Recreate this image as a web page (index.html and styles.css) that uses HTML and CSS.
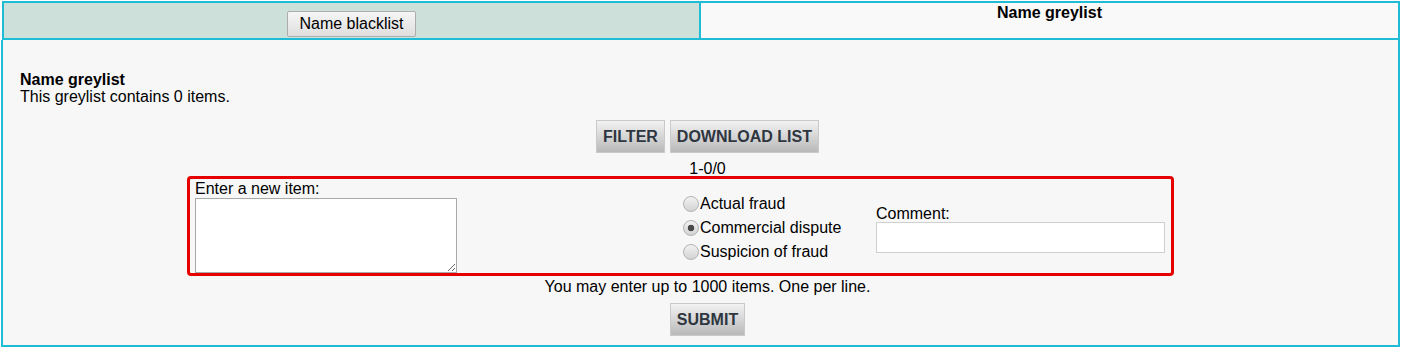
FILE: index.html
```html
<!DOCTYPE html>
<html lang="en">
<head>
  <meta charset="UTF-8">
  <title>Name greylist</title>
  <link rel="stylesheet" href="styles.css">
</head>
<body>

  <div class="notice"><span>Changes require approval by supervisor</span></div>

  <div class="tabs">
    <div class="tab tab-off">
      <button type="button" class="tab-btn">Name blacklist</button>
    </div>
    <div class="tab tab-on">Name greylist</div>
  </div>

  <div class="panel">
    <div class="intro">
      <b>Name greylist</b><br>
      This greylist contains 0 items.
    </div>

    <div class="actions">
      <button type="button" class="btn">FILTER</button>
      <button type="button" class="btn">DOWNLOAD LIST</button>
    </div>

    <div class="pager">1-0/0</div>

    <form class="entry" id="entryForm">
      <div class="col-items">
        <label for="items">Enter a new item:</label>
        <textarea id="items"></textarea>
      </div>
      <div class="col-type">
        <label class="choice"><input type="radio" name="type" value="actual">Actual fraud</label>
        <label class="choice"><input type="radio" name="type" value="dispute" checked>Commercial dispute</label>
        <label class="choice"><input type="radio" name="type" value="suspicion">Suspicion of fraud</label>
      </div>
      <div class="col-comment">
        <label for="comment">Comment:</label>
        <input type="text" id="comment">
      </div>
    </form>

    <div class="hint">You may enter up to 1000 items. One per line.</div>

    <div class="submit-row">
      <button type="submit" form="entryForm" class="btn">SUBMIT</button>
    </div>
  </div>

</body>
</html>
```

FILE: styles.css
```css
html, body {
  margin: 0;
  background-color: #fff;
  font-family: "Liberation Sans", Arial, sans-serif;
  font-size: 16px;
  color: #000;
}
.notice {
  height: 1px;
  overflow: hidden;
  padding-left: 20px;
}
.notice span {
  display: block;
  margin-top: -16px;
  line-height: 16px;
  color: #e00000;
}
.tabs {
  display: flex;
  margin-left: 2px;
  width: 1398px;
  height: 39px;
}
.tab {
  box-sizing: border-box;
  height: 39px;
  border: 2px solid #1fbcd6;
  text-align: center;
}
.tab-off {
  width: 697px;
  border-right: none;
  background-color: #cde0da;
}
.tab-on {
  flex: 1;
  background-color: #f9f9f9;
  font-weight: bold;
  line-height: 16px;
  padding-top: 2px;
}
.tab-btn {
  margin-top: 8px;
  height: 26px;
  padding: 0 11px;
  font: 16px "Liberation Sans", Arial, sans-serif;
  color: #000;
  background: linear-gradient(#f6f6f6, #dedede);
  border: 1px solid #adadad;
  border-radius: 2px;
}
.panel {
  box-sizing: border-box;
  margin-left: 1px;
  width: 1399px;
  border: 2px solid #1fbcd6;
  border-top: none;
  background-color: #f7f7f7;
  padding: 31px 3px 9px 17px;
}
.intro {
  line-height: 17px;
}
.actions {
  display: flex;
  justify-content: center;
  gap: 5px;
  margin-top: 15px;
}
.btn {
  height: 33px;
  padding: 0 6px;
  font: bold 16px "Liberation Sans", Arial, sans-serif;
  color: #2e3640;
  background: linear-gradient(#f2f2f2, #b9b9b9);
  border: 1px solid #c9c9c9;
}
.pager {
  margin-top: 9px;
  line-height: 14px;
  text-align: center;
}
.entry {
  box-sizing: border-box;
  margin: 0 0 0 167px;
  width: 987px;
  height: 100px;
  border: 3px solid #e60000;
  border-radius: 4px;
  display: grid;
  grid-template-columns: 493px 193px 1fr;
}
.col-items {
  padding: 2px 0 0 5px;
}
.col-items label {
  display: block;
  line-height: 16px;
}
.col-items textarea {
  display: block;
  box-sizing: border-box;
  margin-top: 1px;
  width: 262px;
  height: 75px;
  border: 1px solid #a9a9a9;
  background-color: #fff;
}
.col-type {
  align-self: center;
  margin-top: 3px;
}
.choice {
  display: flex;
  align-items: center;
  height: 24px;
}
.choice input {
  appearance: none;
  -webkit-appearance: none;
  box-sizing: border-box;
  width: 16px;
  height: 16px;
  margin: 0 1px 0 0;
  border: 1px solid #b4b4b4;
  border-radius: 50%;
  background: linear-gradient(#f2f2f2, #d2d2d2);
}
.choice input:checked {
  background: radial-gradient(circle, #4a4a4a 0 3px, transparent 3.6px), linear-gradient(#f2f2f2, #d2d2d2);
}
.col-comment {
  align-self: center;
  margin-top: 6px;
}
.col-comment label {
  display: block;
  line-height: 16px;
}
.col-comment input {
  display: block;
  box-sizing: border-box;
  width: 289px;
  height: 31px;
  border: 1px solid #cfcfcf;
  background-color: #fff;
}
.hint {
  margin-top: 3px;
  line-height: 16px;
  text-align: center;
}
.submit-row {
  display: flex;
  justify-content: center;
  margin-top: 8px;
}
```
